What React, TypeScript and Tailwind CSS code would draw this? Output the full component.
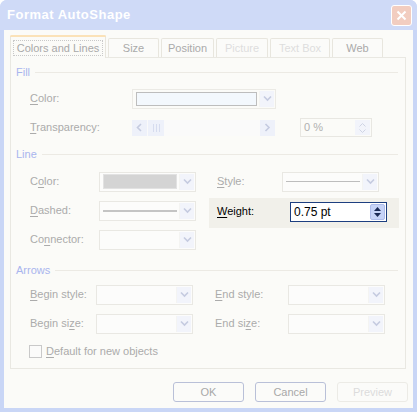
import React from "react";

const Chevron = ({ color = "#c5cbe0", dir = "down" }: { color?: string; dir?: "down" | "left" | "right" }) => {
  const d = dir === "down" ? "M1 1.5 L4.5 5 L8 1.5" : dir === "left" ? "M5 1 L1.5 4.5 L5 8" : "M1.5 1 L5 4.5 L1.5 8";
  const w = dir === "down" ? 9 : 7;
  const h = dir === "down" ? 7 : 9;
  return (
    <svg width={w} height={h} viewBox={`0 0 ${w} ${h}`}>
      <path d={d} stroke={color} strokeWidth="1.6" fill="none" />
    </svg>
  );
};

const ArrowBtn = () => (
  <div className="w-[15px] h-full flex items-center justify-center bg-[#f2f4fb] border-l border-[#f4f4f2]">
    <Chevron />
  </div>
);

const Combo = ({ children }: { children?: React.ReactNode }) => (
  <div className="w-[97px] h-[20px] flex border border-[#e9e8e3] bg-[#fcfcfb] p-[1px]">
    <div className="flex-1 flex items-center px-[2px]">{children}</div>
    <ArrowBtn />
  </div>
);

const U = ({ c }: { c: string }) => <span className="underline underline-offset-[2px]">{c}</span>;

const Label = ({ pre = "", u, post, className = "" }: { pre?: string; u: string; post: string; className?: string }) => (
  <span className={"text-[#ababab] whitespace-nowrap " + className}>
    {pre}
    <U c={u} />
    {post}
  </span>
);

const Header = ({ text, className = "" }: { text: string; className?: string }) => (
  <div className={"h-[20px] flex items-center pl-[5px] pr-[7px] gap-[5px] " + className}>
    <span className="text-[#a9b5ee]">{text}</span>
    <div className="flex-1 h-px bg-[#eceae4]" />
  </div>
);

const Tab = ({ label, disabled = false, w }: { label: string; disabled?: boolean; w: string }) => (
  <div
    className={
      "h-[19px] flex items-center justify-center border border-b-0 border-[#e8e6de] rounded-t-[2px] bg-[#fbfbf9] " +
      w +
      (disabled ? " text-[#dedede]" : " text-[#aaaaaa]")
    }
  >
    {label}
  </div>
);

const Button = ({ label, disabled = false }: { label: string; disabled?: boolean }) => (
  <div
    className={
      "w-[71px] h-[20px] flex items-center justify-center rounded-[3px] border bg-[#fbfbf9] " +
      (disabled ? "border-[#ecebe6] text-[#dcdcdc]" : "border-[#b9c0d8] text-[#a8a8a8]")
    }
  >
    {label}
  </div>
);

export default function App() {
  return (
    <div className="w-[417px] h-[412px] bg-white">
      <div className="w-[417px] h-[412px] flex flex-col bg-[#c9d6f6] rounded-t-[7px] overflow-hidden font-['Liberation_Sans',Arial,sans-serif] text-[11px]">
        {/* Title bar */}
        <div className="h-[30px] flex items-center justify-between pl-[7px] pr-[5px] bg-[#cfdaf7]">
          <span className="text-white font-bold text-[13px] tracking-[0.5px]">Format AutoShape</span>
          <div className="w-[21px] h-[21px] rounded-[3px] border border-white bg-[#f2cdc0] flex items-center justify-center">
            <svg width="11" height="11" viewBox="0 0 11 11">
              <path d="M1.5 1.5 L9.5 9.5 M9.5 1.5 L1.5 9.5" stroke="white" strokeWidth="2" />
            </svg>
          </div>
        </div>

        {/* Body */}
        <div className="flex-1 mx-[4px] mb-[4px] bg-[#fbfbf8] flex flex-col">
          {/* Tabs */}
          <div className="pl-[6px] pt-[5px] flex items-end gap-[2px] h-[27px]">
            <div className="relative z-10 -mb-px w-[96px] h-[23px] border border-b-0 border-[#e8e6de] rounded-t-[2px] bg-[#fbfbf8] flex flex-col">
              <div className="h-[2px] bg-[#fbe2b8] rounded-t-[2px] -mx-px -mt-px" />
              <div className="flex-1 flex items-center justify-center pt-[1px]">
                <span className="border border-dotted border-[#c9c9c9] px-[3px] h-[16px] flex items-center text-[#a9a9a9]">
                  Colors and Lines
                </span>
              </div>
            </div>
            <Tab label="Size" w="w-[51px]" />
            <Tab label="Position" w="w-[53px]" />
            <Tab label="Picture" w="w-[52px]" disabled />
            <Tab label="Text Box" w="w-[60px]" disabled />
            <Tab label="Web" w="w-[51px]" />
          </div>

          {/* Panel */}
          <div className="ml-[6px] w-[396px] h-[312px] border border-[#e9e8e2] bg-[#fbfbf8] pt-[4px] flex flex-col">
            <Header text="Fill" />
            {/* Fill Color */}
            <div className="mt-[2px] h-[29px] flex items-center pl-[19px]">
              <div className="w-[102px]">
                <Label u="C" post="olor:" />
              </div>
              <div className="w-[144px] h-[20px] flex border border-[#ebeae5] p-[1px]">
                <div className="flex-1 flex items-center px-[2px]">
                  <div className="w-full h-[14px] border border-[#bdbdbd] bg-[#f3f8fd]" />
                </div>
                <ArrowBtn />
              </div>
            </div>
            {/* Transparency */}
            <div className="h-[29px] flex items-center pl-[19px]">
              <div className="w-[102px]">
                <Label u="T" post="ransparency:" />
              </div>
              <div className="w-[143px] h-[16px] flex items-center bg-[#fafafa]">
                <div className="w-[15px] h-[16px] flex items-center justify-center bg-[#eef1fa]">
                  <Chevron dir="left" />
                </div>
                <div className="ml-[1px] w-[16px] h-[16px] flex items-center justify-center gap-[2px] bg-[#eef1fa]">
                  <div className="w-px h-[8px] bg-[#d6dcef]" />
                  <div className="w-px h-[8px] bg-[#d6dcef]" />
                  <div className="w-px h-[8px] bg-[#d6dcef]" />
                </div>
                <div className="flex-1" />
                <div className="w-[15px] h-[16px] flex items-center justify-center bg-[#eef1fa]">
                  <Chevron dir="right" />
                </div>
              </div>
              <div className="ml-[25px] w-[72px] h-[19px] flex border border-[#e8e7e2] p-[1px]">
                <div className="flex-1 flex items-center pl-[2px] text-[#b0b0b0]">0 %</div>
                <div className="w-[15px] flex flex-col items-center justify-center gap-[2px] bg-[#f2f4fb]">
                  <svg width="7" height="4" viewBox="0 0 7 4"><path d="M0.5 3.5 L3.5 0.5 L6.5 3.5" stroke="#cfd4e4" fill="none" /></svg>
                  <svg width="7" height="4" viewBox="0 0 7 4"><path d="M0.5 0.5 L3.5 3.5 L6.5 0.5" stroke="#cfd4e4" fill="none" /></svg>
                </div>
              </div>
            </div>

            <Header text="Line" className="mt-[2px]" />
            {/* Color / Style */}
            <div className="mt-[3px] h-[29px] flex items-center pl-[19px]">
              <div className="w-[69px]">
                <Label pre="C" u="o" post="lor:" />
              </div>
              <Combo>
                <div className="w-full h-[15px] bg-[#d4d4d4] border border-[#e2e2e2]" />
              </Combo>
              <div className="ml-[13px] pl-[8px] w-[73px]">
                <Label u="S" post="tyle:" />
              </div>
              <Combo>
                <div className="w-full h-px bg-[#bdbdbd]" />
              </Combo>
            </div>
            {/* Dashed / Weight */}
            <div className="h-[29px] flex items-center pl-[19px]">
              <div className="w-[69px]">
                <Label u="D" post="ashed:" />
              </div>
              <Combo>
                <div className="w-full h-[2px] bg-[#c4c4c4]" />
              </Combo>
              <div className="ml-[13px] self-start mt-[2px] h-[30px] w-[190px] bg-[#f1f0ea] flex items-center pb-[3px] pl-[8px]">
                <div className="w-[73px] text-black">
                  <U c="W" />
                  eight:
                </div>
                <div className="w-[97px] h-[20px] flex border border-[#1d3f80] bg-white">
                  <div className="flex-1 flex items-center pl-[3px] text-black text-[12px]">0.75 pt</div>
                  <div className="w-[15px] m-[1px] rounded-[2px] border border-[#aebcea] bg-[#c6d3f7] flex flex-col items-center justify-center gap-[2px]">
                    <svg width="7" height="4" viewBox="0 0 7 4"><path d="M0 4 L3.5 0 L7 4 Z" fill="#1b2a55" /></svg>
                    <svg width="7" height="4" viewBox="0 0 7 4"><path d="M0 0 L3.5 4 L7 0 Z" fill="#1b2a55" /></svg>
                  </div>
                </div>
              </div>
            </div>
            {/* Connector */}
            <div className="h-[29px] flex items-center pl-[19px]">
              <div className="w-[69px]">
                <Label pre="Co" u="n" post="nector:" />
              </div>
              <Combo />
            </div>

            <Header text="Arrows" className="mt-[6px]" />
            {/* Begin style / End style */}
            <div className="h-[29px] flex items-center pl-[19px]">
              <div className="w-[66px]">
                <Label u="B" post="egin style:" />
              </div>
              <Combo />
              <div className="ml-[22px] w-[73px]">
                <Label u="E" post="nd style:" />
              </div>
              <Combo />
            </div>
            {/* Begin size / End size */}
            <div className="h-[29px] flex items-center pl-[19px]">
              <div className="w-[66px]">
                <Label pre="Begin si" u="z" post="e:" />
              </div>
              <Combo />
              <div className="ml-[22px] w-[73px]">
                <Label pre="End si" u="z" post="e:" />
              </div>
              <Combo />
            </div>
            {/* Checkbox */}
            <div className="h-[26px] flex items-center pl-[18px] gap-[4px]">
              <div className="w-[13px] h-[13px] border border-[#c9c9c9] bg-[#fbfbfa]" />
              <Label u="D" post="efault for new objects" />
            </div>
          </div>

          {/* Buttons */}
          <div className="mt-[13px] flex justify-end gap-[11px] pr-[5px]">
            <Button label="OK" />
            <Button label="Cancel" />
            <Button label="Preview" disabled />
          </div>
        </div>
      </div>
    </div>
  );
}
